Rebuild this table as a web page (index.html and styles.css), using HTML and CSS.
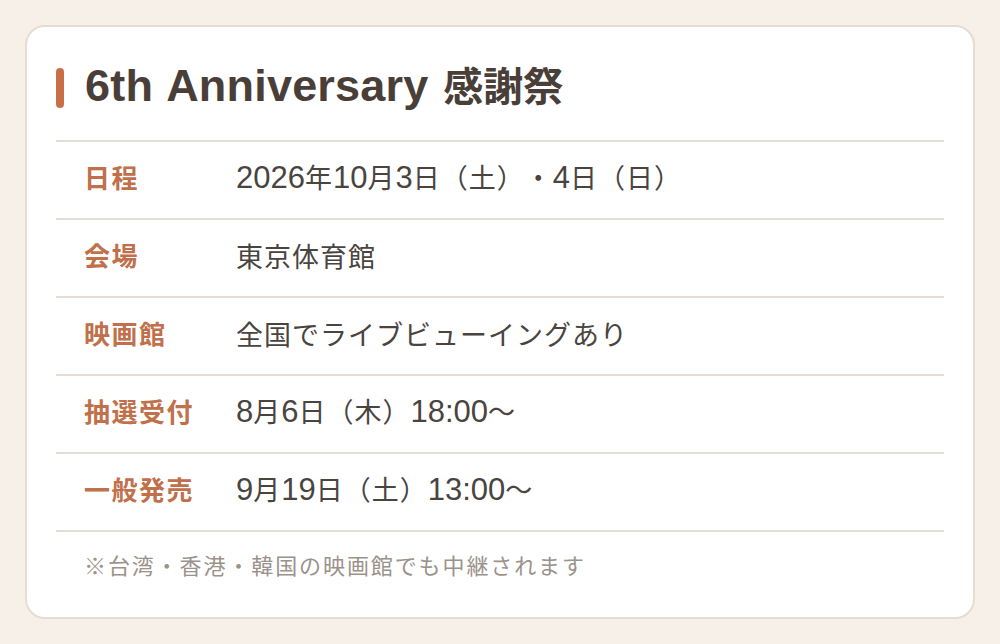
FILE: index.html
```html
<!DOCTYPE html>
<html lang="ja">
<head>
<meta charset="utf-8">
<link rel="stylesheet" href="styles.css">
</head>
<body>
<div class="card">
  <div class="header">
    <span class="bar"></span>
    <h1 class="title"><span class="lat">6th Anniversary </span>感謝祭</h1>
  </div>
  <div class="rows">
    <div class="row"><div class="label">日程</div><div class="value"><span class="lat">2026</span>年<span class="lat">10</span>月<span class="lat">3</span>日（土）・<span class="lat">4</span>日（日）</div></div>
    <div class="row"><div class="label">会場</div><div class="value">東京体育館</div></div>
    <div class="row"><div class="label">映画館</div><div class="value">全国でライブビューイングあり</div></div>
    <div class="row"><div class="label">抽選受付</div><div class="value"><span class="lat">8</span>月<span class="lat">6</span>日（木）<span class="lat">18:00</span>～</div></div>
    <div class="row"><div class="label">一般発売</div><div class="value"><span class="lat">9</span>月<span class="lat">19</span>日（土）<span class="lat">13:00</span>～</div></div>
  </div>
  <p class="note">※台湾・香港・韓国の映画館でも中継されます</p>
</div>
</body>
</html>
```
FILE: styles.css
```css
html, body {
  margin: 0;
  padding: 0;
  background: #f7f0e8;
}
body {
  padding: 25px;
  font-family: "Noto Sans CJK JP", sans-serif;
  text-spacing-trim: space-all;
  font-feature-settings: "chws" 0, "halt" 0, "palt" 0;
}
.card {
  background: #ffffff;
  border: 2px solid #e6ddd1;
  border-radius: 20px;
  height: 594px;
  box-sizing: border-box;
  padding: 30px 29px 0 29px;
}
.header {
  display: flex;
  align-items: center;
  gap: 21px;
  height: 60px;
  margin-top: 1px;
  margin-bottom: 22px;
}
.bar {
  width: 8px;
  height: 40px;
  border-radius: 4px;
  background: #c96f48;
  flex: none;
}
.title {
  margin: 0;
  font-size: 40px;
  font-weight: 700;
  color: #4a3f38;
  line-height: 1;
  position: relative;
  top: -3px;
}
.title .lat {
  font-family: "Liberation Sans", Arial, sans-serif;
  font-size: 45px;
  letter-spacing: 0.2px;
  word-spacing: 2px;
}
.rows {
  border-bottom: 2px solid #e3ded5;
}
.row {
  display: flex;
  align-items: center;
  height: 76px;
  border-top: 2px solid #e3ded5;
}
.label {
  width: 180px;
  padding-left: 28px;
  box-sizing: border-box;
  flex: none;
  font-size: 26px;
  line-height: 1;
  font-weight: 700;
  color: #c0704a;
  letter-spacing: 1.5px;
  margin-top: -6px;
}
.value {
  font-size: 27px;
  line-height: 1;
  font-weight: 400;
  color: #4a4440;
  letter-spacing: 1px;
  margin-top: -6px;
}
.value .lat {
  font-family: "Liberation Sans", Arial, sans-serif;
  font-size: 31px;
  letter-spacing: 0;
}
.note {
  margin: 0;
  padding: 18px 0 0 28px;
  font-size: 22px;
  line-height: 28px;
  color: #9b928b;
  letter-spacing: 1.9px;
}
```
